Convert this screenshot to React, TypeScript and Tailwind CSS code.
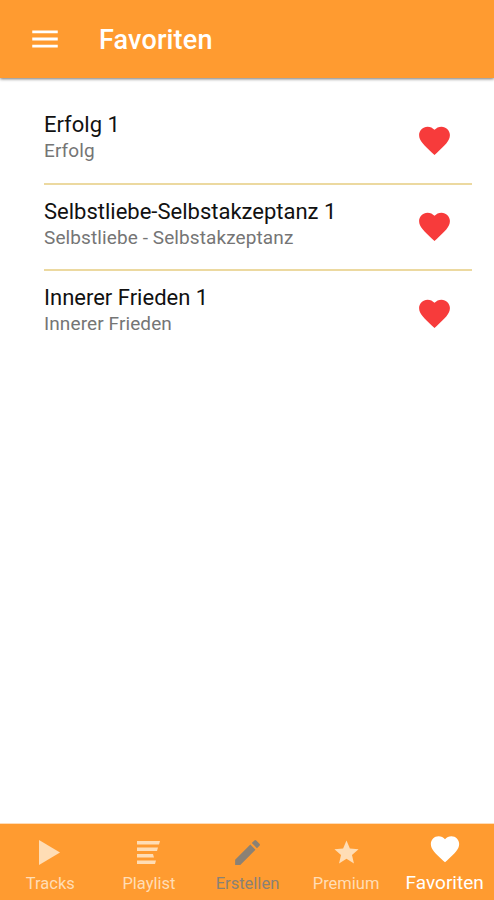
import React from 'react';
import { MdEdit, MdFavorite, MdMenu, MdStar } from 'react-icons/md';

const FAVORITES = [
  { title: 'Erfolg 1', category: 'Erfolg' },
  { title: 'Selbstliebe-Selbstakzeptanz 1', category: 'Selbstliebe - Selbstakzeptanz' },
  { title: 'Innerer Frieden 1', category: 'Innerer Frieden' },
];

const PlayIcon: React.FC = () => (
  <svg className="w-[21px] h-[25px] mr-px" viewBox="0 0 21 26" preserveAspectRatio="none" fill="currentColor">
    <path d="M0 0v26l21-13z" />
  </svg>
);

const PlaylistIcon: React.FC = () => (
  <svg className="w-[23px] h-[23px]" viewBox="0 0 23 23" fill="currentColor">
    <path d="M0 0h23l-1 3.4H0zM0 6.5h21l-1 3.4H0zM0 13h16l1 3.4H0zM0 19.5h19l-1 3.4H0z" />
  </svg>
);

const TABS = [
  { label: 'Tracks', icon: <PlayIcon />, style: 'text-[#ffddb5] text-[16.5px]' },
  { label: 'Playlist', icon: <PlaylistIcon />, style: 'text-[#ffddb5] text-[16.5px]' },
  { label: 'Erstellen', icon: <MdEdit size={33} />, style: 'text-[#8a8175] text-[16.5px]' },
  { label: 'Premium', icon: <MdStar size={29} />, style: 'text-[#ffddb5] text-[16.5px]' },
  { label: 'Favoriten', icon: <MdFavorite size={34} />, style: 'text-white text-[19px]' },
];

const App: React.FC = () => {
  return (
    <div className="flex h-[900px] w-[494px] flex-col overflow-hidden bg-white font-['Roboto',sans-serif]">
      <header className="flex h-[78px] shrink-0 items-center bg-[#ff9b30] pl-[27.5px] text-white shadow-[0_1px_3px_rgba(0,0,0,0.55)]">
        <MdMenu size={34} />
        <h1 className="ml-[37.5px] pt-[2px] text-[27px] font-medium leading-none tracking-[0.15px]">Favoriten</h1>
      </header>

      <main className="flex-1 pt-[20px] pl-[44px] pr-[22px]">
        {FAVORITES.map((item) => (
          <div
            key={item.title}
            className="flex h-[86.5px] items-center justify-between border-b-2 border-[#ecd9a0] pr-[19px] last:border-transparent"
          >
            <div className="whitespace-nowrap pb-[4px]">
              <div className="text-[22px] leading-[26px] text-[#111]">{item.title}</div>
              <div className="text-[19px] leading-[26px] tracking-[0.1px] text-[#757575]">{item.category}</div>
            </div>
            <MdFavorite size={37} className="text-[#f73b3b]" />
          </div>
        ))}
      </main>

      <nav className="flex h-[77px] shrink-0 border-t border-[#ffdcb8] bg-[#ff9b30] pl-px">
        {TABS.map((tab) => (
          <div key={tab.label} className={`flex flex-1 flex-col items-center ${tab.style}`}>
            <div className={`flex items-center ${tab.label === 'Favoriten' ? 'mt-[8px] h-[34px]' : 'mt-[11px] h-[34px]'}`}>
              {tab.icon}
            </div>
            <span className={tab.label === 'Favoriten' ? 'mt-[6px] leading-[22px]' : 'mt-[4px] leading-[22px]'}>
              {tab.label}
            </span>
          </div>
        ))}
      </nav>
    </div>
  );
};

export default App;
